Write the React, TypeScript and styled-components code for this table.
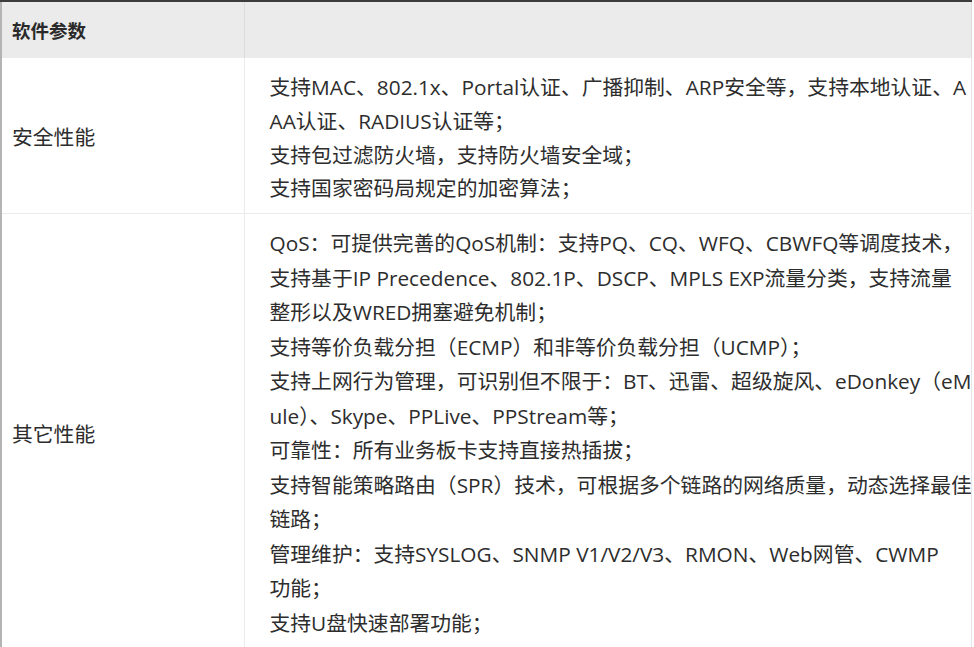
import React from "react";
import styled, { createGlobalStyle } from "styled-components";

const Global = createGlobalStyle`
  html, body {
    margin: 0;
    padding: 0;
    background: #ffffff;
    overflow: hidden;
  }
  body {
    font-family: "Open Sans", "Noto Sans CJK SC", sans-serif;
    color: #2d2d2d;
  }
`;

const Table = styled.table`
  width: 972px;
  border-collapse: collapse;
  table-layout: fixed;
  border-top: 2px solid #3c3c3c;
  border-left: 2px solid #b4b4b4;
  border-right: 1px solid #e6e6e6;
`;

const HeadCell = styled.th`
  height: 56px;
  padding: 0 10px;
  background: #ebebeb;
  border-right: 1px solid #dcdcdc;
  text-align: left;
  font-size: 18.5px;
  font-weight: 700;
  color: #2a2a2a;
  font-family: "Noto Sans CJK SC", sans-serif;
  vertical-align: middle;
`;

const LabelCell = styled.td`
  padding: 0 10px;
  border-right: 1px solid #ebebeb;
  border-bottom: 1px solid #ebebeb;
  font-size: 20.8px;
  vertical-align: middle;
  font-family: "Noto Sans CJK SC", sans-serif;
  color: #2d2d2d;
`;

const ContentCell = styled.td<{ $padTop: number; $padBottom: number; $lh: number }>`
  padding: ${(p) => p.$padTop}px 0 ${(p) => p.$padBottom}px 25px;
  border-bottom: 1px solid #ebebeb;
  font-size: 20.8px;
  line-height: ${(p) => p.$lh}px;
  vertical-align: top;
  white-space: nowrap;
  overflow: hidden;
`;

const Para = styled.p`
  margin: 0;
`;

const rows: { label: string; padTop: number; padBottom: number; lh: number; paras: string[][] }[] = [
  {
    label: "安全性能",
    padTop: 13,
    padBottom: 7,
    lh: 33.8,
    paras: [
      ["支持MAC、802.1x、Portal认证、广播抑制、ARP安全等，支持本地认证、A", "AA认证、RADIUS认证等；"],
      ["支持包过滤防火墙，支持防火墙安全域；"],
      ["支持国家密码局规定的加密算法；"],
    ],
  },
  {
    label: "其它性能",
    padTop: 12,
    padBottom: 12,
    lh: 34.5,
    paras: [
      [
        "QoS：可提供完善的QoS机制：支持PQ、CQ、WFQ、CBWFQ等调度技术，",
        "支持基于IP Precedence、802.1P、DSCP、MPLS EXP流量分类，支持流量",
        "整形以及WRED拥塞避免机制；",
      ],
      ["支持等价负载分担（ECMP）和非等价负载分担（UCMP）；"],
      ["支持上网行为管理，可识别但不限于：BT、迅雷、超级旋风、eDonkey（eM", "ule）、Skype、PPLive、PPStream等；"],
      ["可靠性：所有业务板卡支持直接热插拔；"],
      ["支持智能策略路由（SPR）技术，可根据多个链路的网络质量，动态选择最佳", "链路；"],
      ["管理维护：支持SYSLOG、SNMP V1/V2/V3、RMON、Web网管、CWMP", "功能；"],
      ["支持U盘快速部署功能；"],
    ],
  },
];

export default function App() {
  return (
    <>
      <Global />
      <Table>
        <colgroup>
          <col style={{ width: 243 }} />
          <col />
        </colgroup>
        <thead>
          <tr>
            <HeadCell>软件参数</HeadCell>
            <HeadCell />
          </tr>
        </thead>
        <tbody>
          {rows.map((r) => (
            <tr key={r.label}>
              <LabelCell>{r.label}</LabelCell>
              <ContentCell $padTop={r.padTop} $padBottom={r.padBottom} $lh={r.lh}>
                {r.paras.map((lines, i) => (
                  <Para key={i}>
                    {lines.map((l, j) => (
                      <React.Fragment key={j}>
                        {j > 0 && <br />}
                        {l}
                      </React.Fragment>
                    ))}
                  </Para>
                ))}
              </ContentCell>
            </tr>
          ))}
        </tbody>
      </Table>
    </>
  );
}
